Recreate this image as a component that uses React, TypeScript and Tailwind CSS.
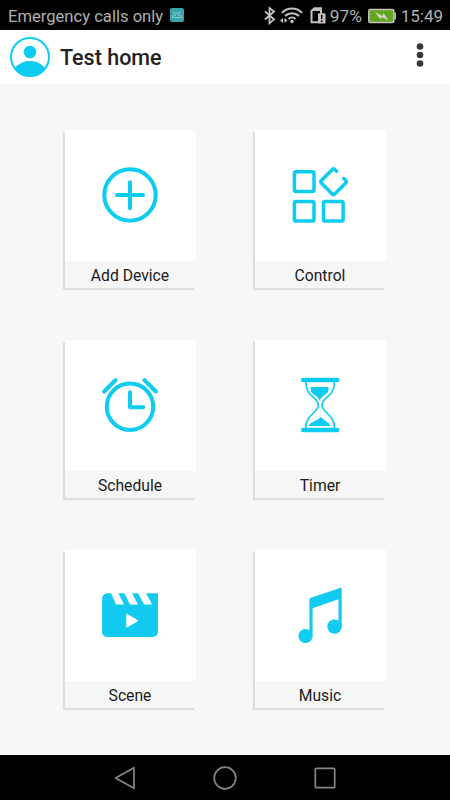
import type { ReactNode } from "react";

const CYAN = "#0ccdf1";

function Tile({ label, children }: { label: string; children: ReactNode }) {
  return (
    <div className="flex h-[158px] w-[131px] flex-col bg-[#f6f6f6] shadow-[-2px_2px_1px_#dedede]">
      <div className="flex h-[131px] items-start bg-white pl-[37px] pt-[37px]">
        <svg width="56" height="56" viewBox="0 0 56 56" fill="none" stroke={CYAN} strokeWidth="4" strokeLinecap="round" strokeLinejoin="round">
          {children}
        </svg>
      </div>
      <div className="flex h-[27px] items-center justify-center pr-px pt-[2px] text-[15.700px] leading-6 text-[#1b1b1b]">{label}</div>
    </div>
  );
}

function StatusBar() {
  return (
    <div className="flex h-[30px] shrink-0 items-center bg-black pl-2 pr-[7px] text-[#b0b0b0]">
      <span className="w-[162px] whitespace-nowrap pt-[3px] text-[16.6px] leading-[27px]">Emergency calls only</span>
      <svg width="14" height="14" viewBox="0 0 14 14">
        <rect width="14" height="14" rx="2" fill="#37a3aa" />
        <path d="M2.500 9.500c.4-6 8.600-6 9 0zM4.500 5 3.500 3.500M9.500 5l1-1.500" fill="none" stroke="#9bcbd0" strokeWidth=".9" />
        <path d="M5 7h1v1H5zM8 7h1v1H8z" fill="#9bcbd0" />
      </svg>
      <svg className="ml-auto" width="64" height="20" viewBox="0 0 64 20" fill="none" stroke="#c1c1c1" strokeWidth="1.800">
        <path d="m2 6.300 9 8-4.500 4V3l4.500 3.500-9 8" />
        <path d="M19 7.800c6-5.600 14-5.600 20 0M22 11c4-3.800 10-3.800 14 0M25.500 14c2-2 5-2 7 0" strokeWidth="2" />
        <circle cx="29" cy="16.500" r="1.700" fill="#c1c1c1" stroke="none" />
        <path d="m20 13-3 2.500 3 2.500zM21.500 13l3 2.500-3 2.500z" fill="#c1c1c1" stroke="none" />
        <path d="M55 17.200h-6.500V6L51.500 3.200H58v5.500" strokeWidth="2" />
        <path d="M48.500 6 51 3h7v3z" fill="#c1c1c1" stroke="none" />
        <path d="M55 8.300h7.500V18.500H55z" fill="#c1c1c1" stroke="none" />
        <path d="M58.700 10v4M58.700 15.300v1.700" stroke="#000" strokeWidth="1.500" />
      </svg>
      <span className="ml-[3px] w-[38px] whitespace-nowrap pt-[3px] text-[17.400px] leading-[27px]">97%</span>
      <svg className="mt-px" width="29" height="16" viewBox="0 0 29 16">
        <rect x=".8" y="1.500" width="25" height="13" rx="1.500" fill="#62a41d" stroke="#c1c1c1" strokeWidth="1.500" />
        <path d="M26.500 4.500h1.500v7h-1.500z" fill="#c1c1c1" />
        <path d="m7 4 7.500 4 1-3 5 7.500-7-3.500-1 2.500z" fill="#d5d5d5" />
      </svg>
      <span className="ml-[4px] whitespace-nowrap pt-[3px] text-[17px] leading-[27px]">15:49</span>
    </div>
  );
}

export default function App() {
  return (
    <div className="flex h-[800px] w-[450px] flex-col overflow-hidden bg-[#f7f7f7] font-['Roboto',sans-serif]">
      <StatusBar />
      <header className="flex h-[54px] shrink-0 items-center bg-white pl-[10px] pr-[26px]">
        <svg width="40" height="40" viewBox="0 0 40 40">
          <circle cx="20" cy="20" r="19" fill="#fff" stroke={CYAN} strokeWidth="2" />
          <circle cx="20" cy="15" r="6.300" fill={CYAN} />
          <path d="M4.500 31.500C12 21.500 28 21.500 35.500 31.500A19.500 19.500 0 0 1 4.500 31.500Z" fill={CYAN} />
        </svg>
        <h1 className="ml-[10px] pt-[2px] text-[21.500px] font-medium text-[#222]">Test home</h1>
        <svg className="mb-[5px] ml-auto" width="8" height="24" viewBox="0 0 8 24" fill="#393939">
          <circle cx="4" cy="3.500" r="3.300" />
          <circle cx="4" cy="12" r="3.300" />
          <circle cx="4" cy="20.500" r="3.300" />
        </svg>
      </header>
      <main className="grid flex-1 grid-cols-[131px_131px] content-start gap-x-[59px] gap-y-[52px] pl-[65px] pt-[46px]">
        <Tile label="Add Device">
          <circle cx="28" cy="28" r="25.700" />
          <path d="M15 28h26M28 15.200v26" />
        </Tile>
        <Tile label="Control">
          <g strokeWidth="3.500">
            <rect x="2.400" y="4.800" width="19.600" height="19.600" rx="1.600" />
            <rect x="2.400" y="34.500" width="19.600" height="19.600" rx="1.600" />
            <rect x="31.500" y="34.500" width="19.600" height="19.600" rx="1.600" />
            <path d="M44.500 4.300 42.700 2.500Q41.500 1.300 40.300 2.500L29.300 13.500Q28.100 14.700 29.300 15.900L40.300 26.900Q41.500 28.100 42.700 26.900L53.700 15.900Q54.900 14.700 53.700 13.500L51.800 11.600" />
          </g>
        </Tile>
        <Tile label="Schedule">
          <circle cx="28" cy="29.700" r="23.200" />
          <path d="M28 15.300v15h13.200M2.200 14.500 13.500 3.200M42.500 3.200l11.300 11.300" />
        </Tile>
        <Tile label="Timer">
          <path d="M11.200 3h33.900M11.200 53h33.900" strokeWidth="4.600" />
          <path d="M13.800 5C13.800 20 26.300 20 26.300 28S13.800 37 13.800 51M42.500 5C42.500 20 30 20 30 28S42.500 37 42.500 51" strokeWidth="1.600" />
          <path d="M18.700 10h17.800v3C36.500 18 28.500 18 27.700 24.500 27 18 18.700 18 18.700 13zM16.500 49c1-4 9-5 12.500-9 3 4 8.500 5 9.600 9z" fill={CYAN} stroke="none" />
        </Tile>
        <Tile label="Scene">
          <g stroke="none">
            <path d="M6 6.300H56V45a5 5 0 0 1-5 5H5a5 5 0 0 1-5-5V12a5.700 5.700 0 0 1 6-5.700Z" fill="#13cbf1" />
            <path d="M9 6h7.300l5.700 11.600h-8zM22.300 6h7.700l6 11.600h-8zM36 6h8l6 11.600h-8zM25 26.700q-.7-.6-.7.500v12.500q0 1.100 1 .5l10.200-5.800q1-.7 0-1.400z" fill="#fff" />
          </g>
        </Tile>
        <Tile label="Music">
          <g fill="#13cbf1" stroke="none">
            <path d="M17.400 12.200q0-.8.800-1.100L48.800.700q.9-.3.900.6V39.700H46.500V12.200L20.600 21.200V49.300H17.400Z" />
            <circle cx="13.500" cy="49" r="7.100" />
            <circle cx="42.500" cy="39.600" r="7.200" />
          </g>
        </Tile>
      </main>
      <nav className="grid h-[45px] shrink-0 grid-cols-3 place-items-center bg-black px-[75px]">
        <svg width="24" height="24" viewBox="0 0 24 24" fill="none" stroke="#858585" strokeWidth="1.700" strokeLinejoin="round">
          <path d="M21 1.700v20.600L2.500 12Z" />
        </svg>
        <svg width="24" height="24" viewBox="0 0 24 24" fill="none" stroke="#858585" strokeWidth="1.700">
          <circle cx="12" cy="12" r="10.800" />
        </svg>
        <svg width="24" height="24" viewBox="0 0 24 24" fill="none" stroke="#858585" strokeWidth="1.700">
          <rect x="2.300" y="2.300" width="19.400" height="19.400" rx="1" />
        </svg>
      </nav>
    </div>
  );
}
